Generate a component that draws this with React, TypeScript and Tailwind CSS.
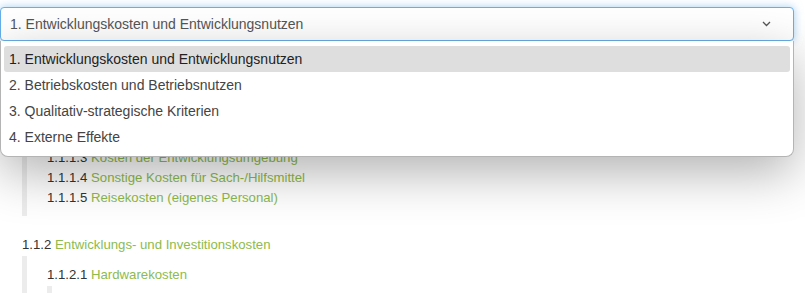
import { useState } from "react";

const options = [
  "1. Entwicklungskosten und Entwicklungsnutzen",
  "2. Betriebskosten und Betriebsnutzen",
  "3. Qualitativ-strategische Kriterien",
  "4. Externe Effekte",
];

function TreeItem({ num, label }: { num: string; label: string }) {
  return (
    <div className="h-5 leading-5">
      <span className="text-[#333]">{num}</span>{" "}
      <span className="text-[#8dbb4c]">{label}</span>
    </div>
  );
}

export default function App() {
  const [selected] = useState(0);

  return (
    <div className="relative h-[293px] w-[805px] overflow-hidden bg-white font-['Liberation_Sans',Arial,sans-serif]">
      <div className="pt-[7px]">
        <div className="flex h-[34px] w-[794px] items-center justify-between rounded-[4px] border border-[#66afe9] bg-white pl-[9px] pr-[22px] text-[14px] text-[#555] shadow-[0_0_8px_rgba(102,175,233,0.6)]">
          <span>{options[selected]}</span>
          <svg width="9" height="6" viewBox="0 0 9 6" fill="none">
            <path d="M1 1l3.5 3.5L8 1" stroke="#555" strokeWidth="1.3" />
          </svg>
        </div>
      </div>

      <div className="pl-[22px] pt-[67px] text-[13.2px]">
        <div className="border-l-[5px] border-[#ececec] pb-[8px] pl-[20px] pt-[40px]">
          <TreeItem num="1.1.1.3" label="Kosten der Entwicklungsumgebung" />
          <TreeItem num="1.1.1.4" label="Sonstige Kosten für Sach-/Hilfsmittel" />
          <TreeItem num="1.1.1.5" label="Reisekosten (eigenes Personal)" />
        </div>
        <div className="mt-[19px] h-5 leading-5">
          <span className="text-[#333]">1.1.2</span>{" "}
          <span className="text-[#8dbb4c]">Entwicklungs- und Investitionskosten</span>
        </div>
        <div className="mt-[1px] border-l-[5px] border-[#ececec] pl-[20px] pt-[9px]">
          <TreeItem num="1.1.2.1" label="Hardwarekosten" />
          <div className="mt-[1px] h-[20px] w-[5px] bg-[#ececec]" />
        </div>
      </div>

      <div className="absolute left-0 top-[41px] w-[794px] rounded-b-[8px] border border-t-0 border-[#b4b4b4] bg-white px-[3px] pb-[6px] pt-[5px] text-[14px] text-[#333] shadow-[0_16px_50px_rgba(0,0,0,0.3)]">
        {options.map((o, i) => (
          <div
            key={o}
            className={`flex h-[26px] items-center rounded-[3px] pl-[5px] ${i === selected ? "bg-[#dedede] text-[#222]" : "text-[#444]"}`}
          >
            {o}
          </div>
        ))}
      </div>
    </div>
  );
}
